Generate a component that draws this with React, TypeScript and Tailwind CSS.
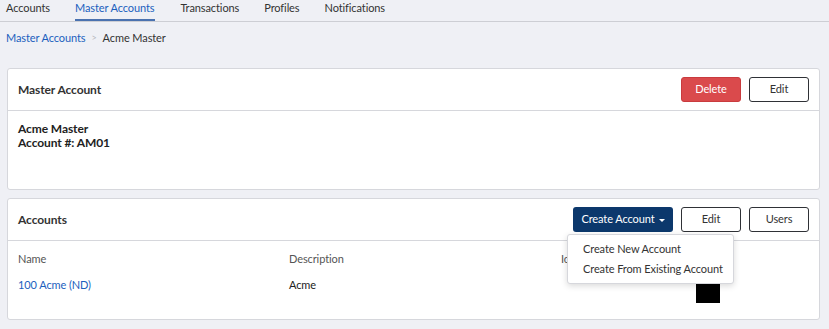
import React from 'react';

const tabs = ['Accounts', 'Master Accounts', 'Transactions', 'Profiles', 'Notifications'];

const OutlineButton: React.FC<{ label: string }> = ({ label }) => (
  <button className="h-[25px] w-[60px] rounded-[3px] border border-[#2f3136] bg-white text-[11px] text-[#333]">
    {label}
  </button>
);

const App: React.FC = () => {
  return (
    <div
      className="min-h-[329px] w-full bg-[#eff0f5] text-[#222] tracking-[-0.1px]"
      style={{ fontFamily: 'Lato, "Open Sans", Arial, sans-serif' }}
    >
      {/* tabs */}
      <div className="flex h-[22px] gap-[25px] border-b border-[#cdced4] pl-[6px]">
        {tabs.map((t) => (
          <div
            key={t}
            className={
              t === 'Master Accounts'
                ? 'h-[21px] border-b-2 border-[#4a72b0] pr-[1px] text-[11px] leading-4 text-[#1b5fbe]'
                : 'h-[21px] text-[11px] leading-4 text-[#333]'
            }
          >
            {t}
          </div>
        ))}
      </div>

      {/* breadcrumb */}
      <div className="mt-[8px] flex items-center pl-[6px] text-[11px] leading-4">
        <span className="text-[#1b5fbe]">Master Accounts</span>
        <span className="mx-[6px] text-[9px] text-[#b8b9bf]">&gt;</span>
        <span className="text-[#333]">Acme Master</span>
      </div>

      <div className="mx-[7px] mt-[22px] flex w-[813px] flex-col gap-[8px]">
        {/* master account card */}
        <div className="h-[122px] rounded-[3px] border border-[#d6d7dc] bg-white">
          <div className="flex h-[42px] items-center justify-between border-b border-[#d6d7dc] pl-[10px] pr-[10px]">
            <span className="text-[12px] font-bold text-[#333]">Master Account</span>
            <div className="flex gap-[8px]">
              <button className="h-[25px] w-[60px] rounded-[3px] border border-[#c93b3e] bg-[#da4a4c] text-[11px] text-white">
                Delete
              </button>
              <OutlineButton label="Edit" />
            </div>
          </div>
          <div className="pl-[10px] pt-[11px] text-[12px] font-bold leading-[14px] text-[#222]">
            <div>Acme Master</div>
            <div>Account #: AM01</div>
          </div>
        </div>

        {/* accounts card */}
        <div className="h-[122px] rounded-[3px] border border-[#d6d7dc] bg-white">
          <div className="flex h-[42px] items-center justify-between border-b border-[#d6d7dc] pl-[10px] pr-[10px]">
            <span className="text-[12px] font-bold text-[#333]">Accounts</span>
            <div className="flex gap-[8px]">
              <div className="relative">
                <button className="flex h-[25px] w-[100px] items-center justify-center gap-[4px] rounded-[3px] bg-[#0c386c] text-[11px] text-white">
                  Create Account
                  <span className="mt-[1px] h-0 w-0 border-x-[3px] border-t-[3px] border-x-transparent border-t-white" />
                </button>
                <div className="absolute left-[-6px] top-[27px] z-10 w-[167px] rounded-[3px] border border-[#d6d7dc] bg-white py-[4px] shadow-[0_2px_6px_rgba(0,0,0,0.15)]">
                  <div className="whitespace-nowrap px-[15px] text-[11px] leading-[20px] text-[#333]">Create New Account</div>
                  <div className="whitespace-nowrap px-[15px] text-[11px] leading-[20px] text-[#333]">Create From Existing Account</div>
                </div>
              </div>
              <OutlineButton label="Edit" />
              <OutlineButton label="Users" />
            </div>
          </div>
          <div className="grid grid-cols-[271px_272px_1fr] pl-[10px] pt-[10px] text-[11px] leading-4">
            <div className="text-[#555]">Name</div>
            <div className="text-[#555]">Description</div>
            <div className="text-[#555]">Icon</div>
            <div className="mt-[10px] text-[#1b5fbe]">100 Acme (ND)</div>
            <div className="mt-[10px] text-[#222]">Acme</div>
            <div className="mt-[12px]">
              <div className="ml-[135px] h-[24px] w-[24px] bg-black" />
            </div>
          </div>
        </div>
      </div>
    </div>
  );
};

export default App;
